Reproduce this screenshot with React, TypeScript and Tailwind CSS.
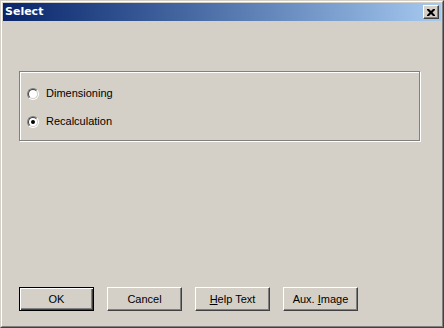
import React from 'react';

const Radio = ({ checked, label }: { checked?: boolean; label: string }) => (
    <div className="flex items-center h-[13px]">
        <div className="w-[12px] h-[12px] rounded-full border border-t-[#808080] border-l-[#808080] border-b-white border-r-white">
            <div className="w-[10px] h-[10px] rounded-full border border-t-[#404040] border-l-[#404040] border-b-[#d4d0c8] border-r-[#d4d0c8] bg-white flex items-center justify-center">
                {checked && <div className="w-[4px] h-[4px] rounded-full bg-black" />}
            </div>
        </div>
        <span className="ml-[7px] text-[11px] leading-[13px] text-black">{label}</span>
    </div>
);

const Btn = ({ children, isDefault }: { children: React.ReactNode; isDefault?: boolean }) => (
    <button
        className={
            isDefault
                ? "w-[75px] h-[24px] border border-black bg-[#d4d0c8] shadow-[inset_1px_1px_#ffffff,inset_-1px_-1px_#404040,inset_-2px_-2px_#808080] text-[11px] text-black flex items-center justify-center"
                : "w-[75px] h-[24px] border border-t-white border-l-white border-b-[#404040] border-r-[#404040] bg-[#d4d0c8] shadow-[inset_-1px_-1px_#808080] text-[11px] text-black flex items-center justify-center"
        }
    >
        {children}
    </button>
);

export default function App() {
    return (
        <div
            className="w-[444px] h-[328px] bg-[#d4d0c8] border border-t-[#d4d0c8] border-l-[#d4d0c8] border-b-[#404040] border-r-[#404040] overflow-hidden"
            style={{ fontFamily: '"Liberation Sans", Arial, sans-serif' }}
        >
            <div className="w-full h-full border border-t-white border-l-white border-b-[#808080] border-r-[#808080] p-px flex flex-col">
                {/* Title bar */}
                <div className="h-[18px] flex items-center justify-between bg-gradient-to-r from-[#0a246a] to-[#a6caf0] pl-[2px] pr-[2px]">
                    <span
                        className="text-white font-bold text-[11px] leading-[18px]"
                        style={{ fontFamily: '"DejaVu Sans", Verdana, sans-serif' }}
                    >
                        Select
                    </span>
                    <div className="w-[16px] h-[14px] bg-[#d4d0c8] border border-t-white border-l-white border-b-[#404040] border-r-[#404040] shadow-[inset_-1px_-1px_#808080] flex items-center justify-center">
                        <svg width="8" height="7" viewBox="0 0 8 7" className="ml-[-1px]">
                            <path d="M0 0h2l2 2 2-2h2v1l-2.5 2.5L8 6v1H6L4 5 2 7H0V6l2.5-2.5L0 1z" fill="black" />
                        </svg>
                    </div>
                </div>

                {/* Body */}
                <div className="flex-1 flex flex-col px-[16px]">
                    <div className="mt-[50px] w-[401px] h-[70px] border border-[#808080] shadow-[1px_1px_#ffffff,inset_1px_1px_#ffffff] flex flex-col pl-[7px] pt-[15px] gap-[15px]">
                        <Radio label="Dimensioning" />
                        <Radio checked label="Recalculation" />
                    </div>

                    <div className="mt-auto mb-[14px] flex gap-[13px]">
                        <Btn isDefault>OK</Btn>
                        <Btn>Cancel</Btn>
                        <Btn>
                            <span><span className="underline">H</span>elp Text</span>
                        </Btn>
                        <Btn>
                            <span>Aux. <span className="underline">I</span>mage</span>
                        </Btn>
                    </div>
                </div>
            </div>
        </div>
    );
}
